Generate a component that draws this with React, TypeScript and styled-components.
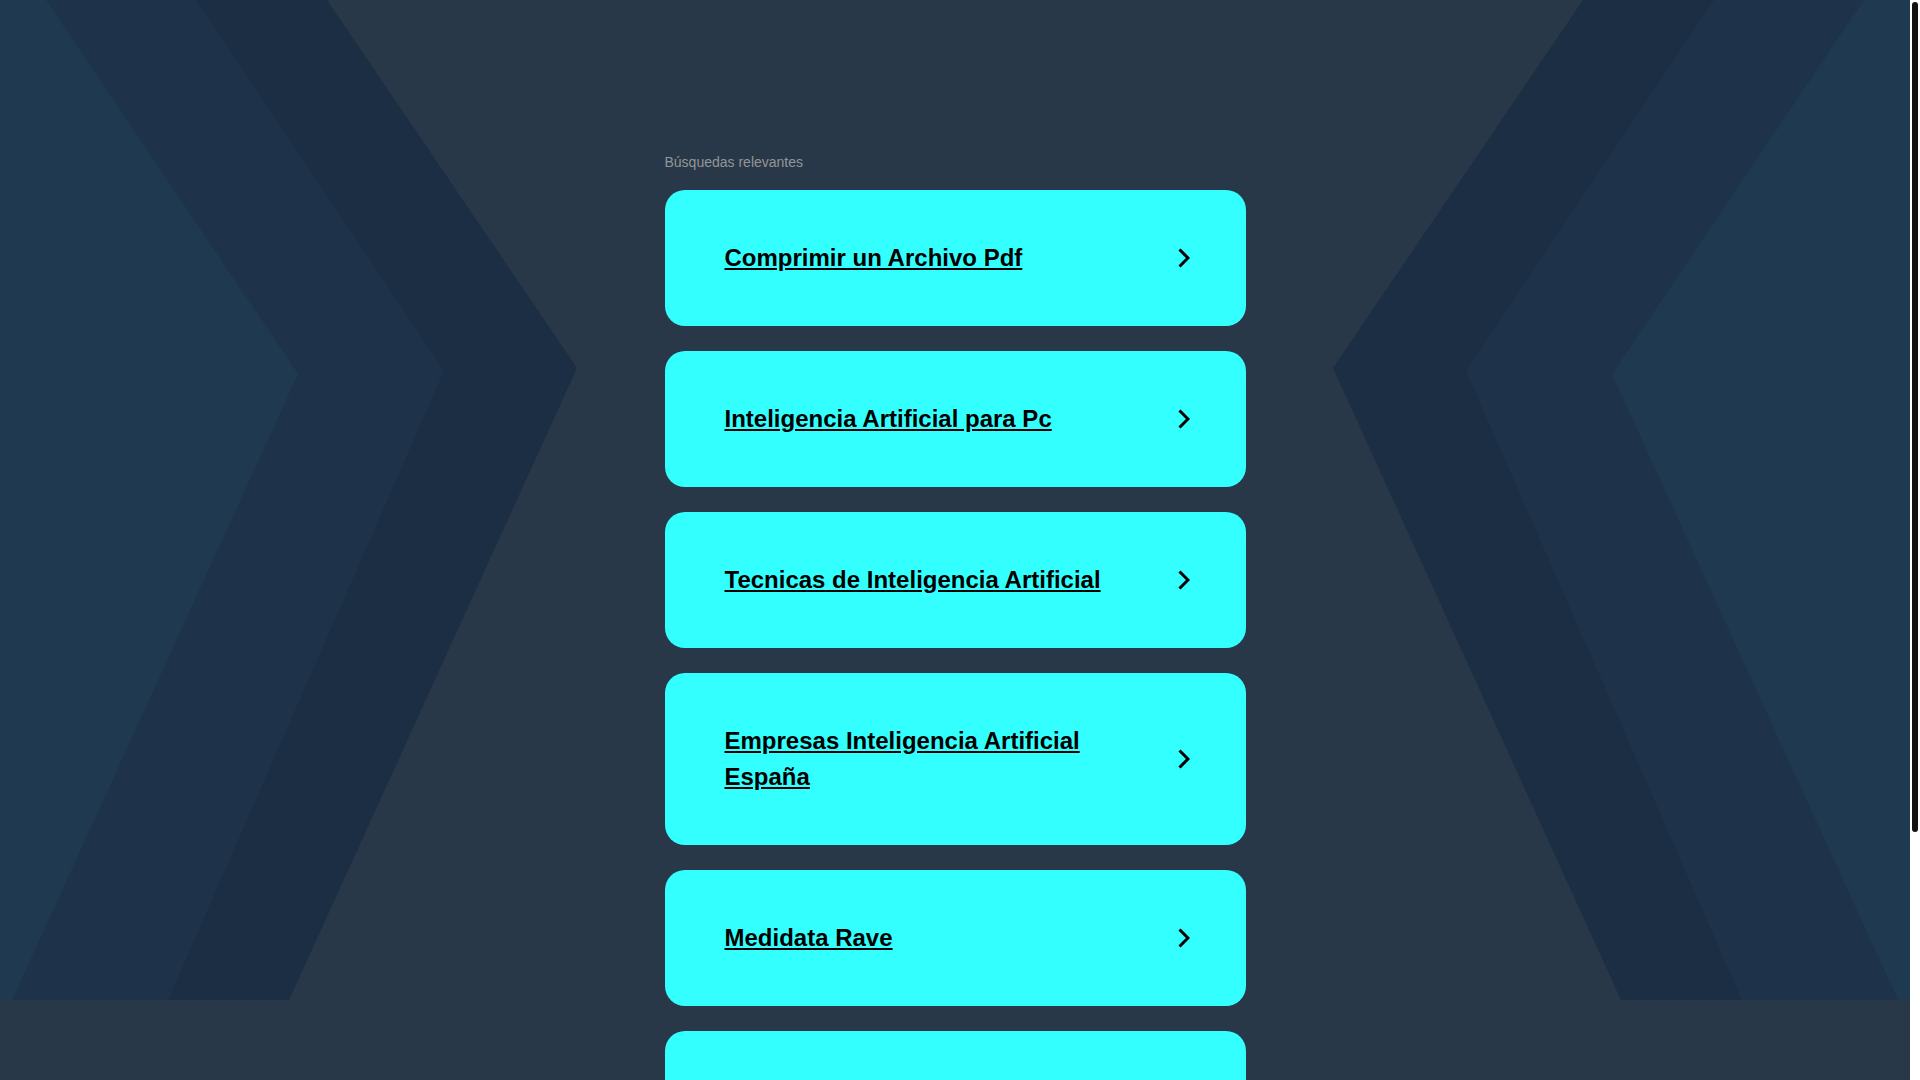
import React from 'react';
import styled, { createGlobalStyle } from 'styled-components';

const GlobalStyle = createGlobalStyle`
  html, body {
    margin: 0;
    padding: 0;
    background: #293848;
    overflow: hidden;
  }
  body {
    font-family: "Liberation Sans", Arial, sans-serif;
  }
`;

const Shell = styled.div`
  display: flex;
  height: 100vh;
  overflow: hidden;
`;

const Viewport = styled.div`
  flex: 1;
  overflow-y: auto;
  scrollbar-width: none;
  &::-webkit-scrollbar {
    display: none;
  }
`;

const ScrollTrack = styled.div`
  width: 10px;
  background: #ffffff;
  padding-top: 2px;
`;

const ScrollThumb = styled.div`
  width: 6px;
  height: 830px;
  margin-left: 2px;
  background: #121212;
  border-radius: 3px;
`;

const Page = styled.div`
  position: relative;
  min-height: 1400px;
`;

const Backdrop = styled.svg`
  position: absolute;
  top: 0;
  left: 0;
  width: 100%;
  height: 1000px;
  z-index: 0;
`;

const Content = styled.main`
  position: relative;
  z-index: 1;
  width: 581px;
  margin: 0 auto;
  padding: 154px 0 233px;
`;

const Label = styled.div`
  font-size: 14px;
  line-height: 16px;
  color: #939598;
  margin-bottom: 20px;
`;

const List = styled.div`
  display: flex;
  flex-direction: column;
  gap: 25px;
`;

const Card = styled.a`
  display: flex;
  align-items: center;
  background: #33ffff;
  border-radius: 20px;
  padding: 50px 56px 50px 60px;
  color: #000;
  text-decoration: none;
  cursor: pointer;
`;

const Term = styled.span`
  flex: 1;
  margin-right: 40px;
  font-size: 24px;
  line-height: 36px;
  font-weight: bold;
  text-decoration: underline;
`;

const Chevron = () => (
  <svg width="12" height="20" viewBox="0 0 12 20">
    <path d="M1.5 1.5 L10 10 L1.5 18.5" fill="none" stroke="#000" strokeWidth="3" />
  </svg>
);

const searches = [
  'Comprimir un Archivo Pdf',
  'Inteligencia Artificial para Pc',
  'Tecnicas de Inteligencia Artificial',
  'Empresas Inteligencia Artificial España',
  'Medidata Rave',
  'Software de Gestión Empresarial',
];

function App() {
  return (
    <Shell>
      <GlobalStyle />
      <Viewport>
        <Page>
          <Backdrop viewBox="0 0 1910 1000" preserveAspectRatio="none">
            <polygon points="0,0 327,0 577,368 289,1000 0,1000" fill="#1b2e44" />
            <polygon points="0,0 196,0 444,371 168,1000 0,1000" fill="#1e334a" />
            <polygon points="0,0 46,0 298,374 12,1000 0,1000" fill="#1f3a50" />
            <polygon points="1910,0 1583,0 1333,368 1621,1000 1910,1000" fill="#1b2e44" />
            <polygon points="1910,0 1714,0 1466,371 1742,1000 1910,1000" fill="#1e334a" />
            <polygon points="1910,0 1864,0 1612,374 1898,1000 1910,1000" fill="#1f3a50" />
          </Backdrop>
          <Content>
            <Label>Búsquedas relevantes</Label>
            <List>
              {searches.map((s) => (
                <Card key={s}>
                  <Term>{s}</Term>
                  <Chevron />
                </Card>
              ))}
            </List>
          </Content>
        </Page>
      </Viewport>
      <ScrollTrack>
        <ScrollThumb />
      </ScrollTrack>
    </Shell>
  );
}

export default App;
